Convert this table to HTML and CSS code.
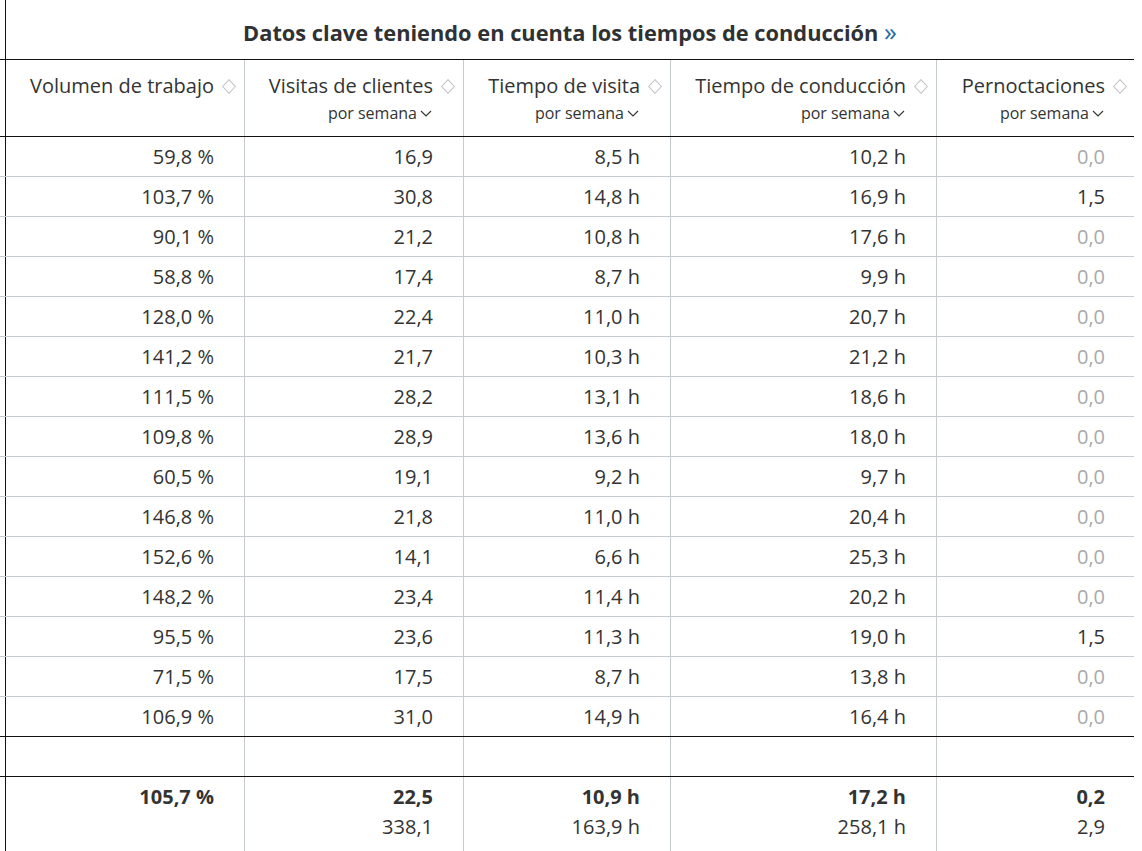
FILE: index.html
```html
<!DOCTYPE html>
<html lang="es">
<head>
<meta charset="utf-8">
<title>Datos clave</title>
<link rel="stylesheet" href="styles.css">
</head>
<body>
<div class="table">
  <div class="row title-row">
    <div class="stub"></div>
    <div class="title">Datos clave teniendo en cuenta los tiempos de conducción <span class="more">»</span></div>
  </div>
  <div class="row head-row">
    <div class="stub"></div>
    <div class="cell head">
      <div class="hl"><span>Volumen de trabajo</span><svg class="sort" viewBox="0 0 14 15"><path d="M7 0.7 L13.3 7.5 L7 14.3 L0.7 7.5 Z"/></svg></div>
    </div>
    <div class="cell head">
      <div class="hl"><span>Visitas de clientes</span><svg class="sort" viewBox="0 0 14 15"><path d="M7 0.7 L13.3 7.5 L7 14.3 L0.7 7.5 Z"/></svg></div>
      <div class="sub">por semana<svg class="chev" viewBox="0 0 12 7"><path d="M1 1 L6 6 L11 1"/></svg></div>
    </div>
    <div class="cell head">
      <div class="hl"><span>Tiempo de visita</span><svg class="sort" viewBox="0 0 14 15"><path d="M7 0.7 L13.3 7.5 L7 14.3 L0.7 7.5 Z"/></svg></div>
      <div class="sub">por semana<svg class="chev" viewBox="0 0 12 7"><path d="M1 1 L6 6 L11 1"/></svg></div>
    </div>
    <div class="cell head">
      <div class="hl"><span>Tiempo de conducción</span><svg class="sort" viewBox="0 0 14 15"><path d="M7 0.7 L13.3 7.5 L7 14.3 L0.7 7.5 Z"/></svg></div>
      <div class="sub">por semana<svg class="chev" viewBox="0 0 12 7"><path d="M1 1 L6 6 L11 1"/></svg></div>
    </div>
    <div class="cell head">
      <div class="hl"><span>Pernoctaciones</span><svg class="sort" viewBox="0 0 14 15"><path d="M7 0.7 L13.3 7.5 L7 14.3 L0.7 7.5 Z"/></svg></div>
      <div class="sub">por semana<svg class="chev" viewBox="0 0 12 7"><path d="M1 1 L6 6 L11 1"/></svg></div>
    </div>
  </div>

  <div class="row data"><div class="stub"></div><div class="cell">59,8 %</div><div class="cell">16,9</div><div class="cell">8,5 h</div><div class="cell">10,2 h</div><div class="cell zero">0,0</div></div>
  <div class="row data"><div class="stub"></div><div class="cell">103,7 %</div><div class="cell">30,8</div><div class="cell">14,8 h</div><div class="cell">16,9 h</div><div class="cell">1,5</div></div>
  <div class="row data"><div class="stub"></div><div class="cell">90,1 %</div><div class="cell">21,2</div><div class="cell">10,8 h</div><div class="cell">17,6 h</div><div class="cell zero">0,0</div></div>
  <div class="row data"><div class="stub"></div><div class="cell">58,8 %</div><div class="cell">17,4</div><div class="cell">8,7 h</div><div class="cell">9,9 h</div><div class="cell zero">0,0</div></div>
  <div class="row data"><div class="stub"></div><div class="cell">128,0 %</div><div class="cell">22,4</div><div class="cell">11,0 h</div><div class="cell">20,7 h</div><div class="cell zero">0,0</div></div>
  <div class="row data"><div class="stub"></div><div class="cell">141,2 %</div><div class="cell">21,7</div><div class="cell">10,3 h</div><div class="cell">21,2 h</div><div class="cell zero">0,0</div></div>
  <div class="row data"><div class="stub"></div><div class="cell">111,5 %</div><div class="cell">28,2</div><div class="cell">13,1 h</div><div class="cell">18,6 h</div><div class="cell zero">0,0</div></div>
  <div class="row data"><div class="stub"></div><div class="cell">109,8 %</div><div class="cell">28,9</div><div class="cell">13,6 h</div><div class="cell">18,0 h</div><div class="cell zero">0,0</div></div>
  <div class="row data"><div class="stub"></div><div class="cell">60,5 %</div><div class="cell">19,1</div><div class="cell">9,2 h</div><div class="cell">9,7 h</div><div class="cell zero">0,0</div></div>
  <div class="row data"><div class="stub"></div><div class="cell">146,8 %</div><div class="cell">21,8</div><div class="cell">11,0 h</div><div class="cell">20,4 h</div><div class="cell zero">0,0</div></div>
  <div class="row data"><div class="stub"></div><div class="cell">152,6 %</div><div class="cell">14,1</div><div class="cell">6,6 h</div><div class="cell">25,3 h</div><div class="cell zero">0,0</div></div>
  <div class="row data"><div class="stub"></div><div class="cell">148,2 %</div><div class="cell">23,4</div><div class="cell">11,4 h</div><div class="cell">20,2 h</div><div class="cell zero">0,0</div></div>
  <div class="row data"><div class="stub"></div><div class="cell">95,5 %</div><div class="cell">23,6</div><div class="cell">11,3 h</div><div class="cell">19,0 h</div><div class="cell">1,5</div></div>
  <div class="row data"><div class="stub"></div><div class="cell">71,5 %</div><div class="cell">17,5</div><div class="cell">8,7 h</div><div class="cell">13,8 h</div><div class="cell zero">0,0</div></div>
  <div class="row data last"><div class="stub"></div><div class="cell">106,9 %</div><div class="cell">31,0</div><div class="cell">14,9 h</div><div class="cell">16,4 h</div><div class="cell zero">0,0</div></div>

  <div class="row data spacer"><div class="stub"></div><div class="cell"></div><div class="cell"></div><div class="cell"></div><div class="cell"></div><div class="cell"></div></div>

  <div class="row foot">
    <div class="stub"></div>
    <div class="cell"><div class="tot">105,7 %</div></div>
    <div class="cell"><div class="tot">22,5</div><div class="sum">338,1</div></div>
    <div class="cell"><div class="tot">10,9 h</div><div class="sum">163,9 h</div></div>
    <div class="cell"><div class="tot">17,2 h</div><div class="sum">258,1 h</div></div>
    <div class="cell"><div class="tot">0,2</div><div class="sum">2,9</div></div>
  </div>
</div>
</body>
</html>
```

FILE: styles.css
```css
html, body {
  margin: 0;
  padding: 0;
  background: #ffffff;
}

body {
  font-family: "Open Sans", "Noto Sans", sans-serif;
  color: #333333;
}

.table {
  width: 1134px;
}

.row {
  display: grid;
  grid-template-columns: 6px 239px 219px 207px 266px 198px;
  border-bottom: 1px solid #c5cbce;
}

.stub {
  border-right: 1px solid #111111;
}

.cell {
  border-right: 1px solid #c5cbce;
  text-align: right;
  padding-right: 30px;
  box-sizing: border-box;
}

.cell:last-child {
  border-right: none;
}

/* title */
.title-row {
  height: 60px;
  box-sizing: border-box;
  border-bottom: 1px solid #111111;
  grid-template-columns: 6px 1128px;
}

.title {
  grid-column: 2;
  font-size: 21.8px;
  font-weight: 700;
  color: #2f3133;
  text-align: center;
  line-height: 30px;
  padding-top: 18px;
  padding-right: 0;
  box-sizing: border-box;
}

.more {
  color: #1f6da6;
  font-weight: 400;
  font-size: 26px;
  line-height: 20px;
}

/* header */
.head-row {
  height: 77px;
  box-sizing: border-box;
  border-bottom: 1px solid #111111;
}

.head {
  padding-top: 13px;
  padding-right: 8px;
}

.hl {
  display: flex;
  justify-content: flex-end;
  align-items: center;
  font-size: 20px;
  line-height: 26px;
  color: #333333;
}

.sort {
  width: 14px;
  height: 15px;
  margin-left: 8px;
  flex: none;
}

.sort path {
  fill: none;
  stroke: #c4c4c4;
  stroke-width: 1.1;
}

.sub {
  display: flex;
  justify-content: flex-end;
  align-items: center;
  font-size: 16px;
  line-height: 22px;
  margin-right: 23px;
  margin-top: 3px;
  color: #333333;
}

.chev {
  width: 12px;
  height: 7px;
  margin-left: 3px;
  flex: none;
}

.chev path {
  fill: none;
  stroke: #333333;
  stroke-width: 1.1;
}

/* data */
.data {
  height: 40px;
  box-sizing: border-box;
}

.data .cell {
  font-size: 20px;
  line-height: 39px;
}

.data .zero {
  color: #a9a9a9;
}

.data.last,
.data.spacer {
  border-bottom: 1px solid #111111;
}

/* footer */
.foot {
  border-bottom: none;
  height: 80px;
}

.foot .cell {
  padding-top: 5px;
  font-size: 20px;
  line-height: 30px;
}

.tot {
  font-weight: 700;
}
```
